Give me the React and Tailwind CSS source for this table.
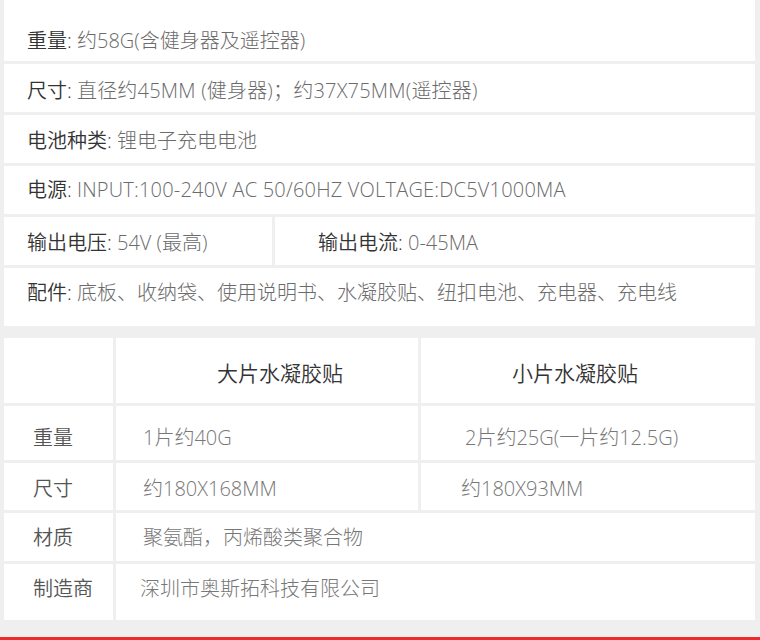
const topRows = [
  { label: '重量', value: '约58G(含健身器及遥控器)', pad: 'h-[61px] pt-[20px]' },
  { label: '尺寸', value: '直径约45MM (健身器)；约37X75MM(遥控器)', pad: 'h-[48px] pt-[5px]', wide: true },
  { label: '电池种类', value: '锂电子充电电池', pad: 'h-[48px] pt-[4px]' },
  { label: '电源', value: 'INPUT:100-240V AC 50/60HZ VOLTAGE:DC5V1000MA', pad: 'h-[48px]', wide: true },
];

function Spec({ label, value, wide }) {
  return (
    <span className="whitespace-nowrap">
      <span className="text-[#333] font-[350]">{label}:</span>{' '}
      <span className={`text-[#6b6b6b] font-light ${wide ? 'tracking-[0.2px]' : ''}`}>{value}</span>
    </span>
  );
}

export default function App() {
  return (
    <div className="w-[760px] h-[640px] overflow-hidden bg-[#efefef] flex flex-col font-['Open_Sans','Noto_Sans_CJK_SC',sans-serif] text-[20px] leading-[24px]">
      <div className="flex flex-col pl-[4px] pr-[5px]">
        {/* 规格 */}
        <div className="flex flex-col gap-[3px]">
          {topRows.map((row) => (
            <div key={row.label} className={`bg-white flex items-center pl-[23px] ${row.pad}`}>
              <Spec label={row.label} value={row.value} wide={row.wide} />
            </div>
          ))}
          <div className="flex gap-[3px] h-[48px]">
            <div className="bg-white w-[268px] flex items-center pl-[23px] pt-[4px]">
              <Spec label="输出电压" value="54V (最高)" />
            </div>
            <div className="bg-white flex-1 flex items-center pl-[43px] pt-[4px]">
              <Spec label="输出电流" value="0-45MA" />
            </div>
          </div>
          <div className="bg-white h-[58px] pl-[23px] pt-[13px]">
            <Spec label="配件" value="底板、收纳袋、使用说明书、水凝胶贴、纽扣电池、充电器、充电线" />
          </div>
        </div>

        {/* 水凝胶贴 */}
        <div className="mt-[12px] grid grid-cols-[109px_302px_1fr] gap-[3px]">
          <div className="bg-white h-[65px]" />
          <div className="bg-white h-[65px] flex items-center pl-[101px] pt-[4px] text-[21px] text-[#333] font-[350]">大片水凝胶贴</div>
          <div className="bg-white h-[65px] flex items-center pl-[91px] pt-[4px] text-[21px] text-[#333] font-[350]">小片水凝胶贴</div>

          <div className="bg-white h-[54px] flex items-center pl-[29px] pt-[10px] text-[#555] font-[350]">重量</div>
          <div className="bg-white h-[54px] flex items-center pl-[27px] pt-[10px] text-[#777] font-light">1片约40G</div>
          <div className="bg-white h-[54px] flex items-center pl-[44px] pt-[10px] text-[#777] font-light">2片约25G(一片约12.5G)</div>

          <div className="bg-white h-[47px] flex items-center pl-[29px] pt-[4px] text-[#555] font-[350]">尺寸</div>
          <div className="bg-white h-[47px] flex items-center pl-[27px] pt-[4px] text-[#777] font-light">约180X168MM</div>
          <div className="bg-white h-[47px] flex items-center pl-[40px] pt-[4px] text-[#777] font-light">约180X93MM</div>

          <div className="bg-white h-[48px] flex items-center pl-[29px] pt-[2px] text-[#555] font-[350]">材质</div>
          <div className="col-span-2 bg-white h-[48px] flex items-center pl-[27px] pt-[2px] text-[#777] font-light">聚氨酯，丙烯酸类聚合物</div>

          <div className="bg-white h-[56px] flex items-start pt-[13px] pl-[29px] text-[#555] font-[350]">制造商</div>
          <div className="col-span-2 bg-white h-[56px] flex items-start pt-[13px] pl-[24px] text-[#777] font-light">深圳市奥斯拓科技有限公司</div>
        </div>
      </div>
      <div className="mt-auto h-[3px] bg-[#ee2a2d]" />
    </div>
  );
}
